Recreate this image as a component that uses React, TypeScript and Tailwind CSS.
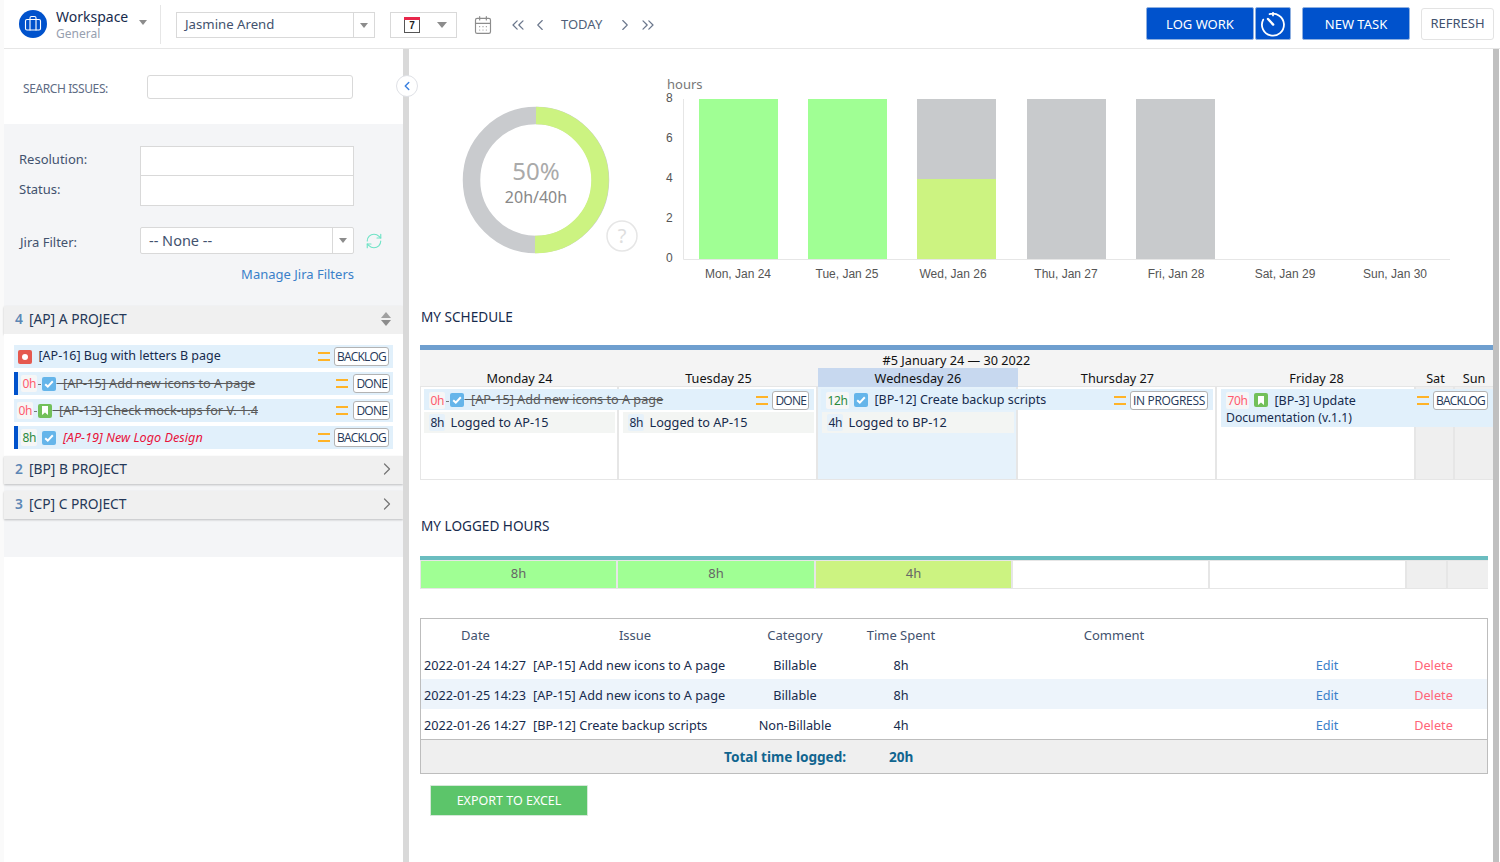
import { Briefcase, CalendarDays, ChevronLeft, ChevronRight, ChevronsLeft, ChevronsRight, RefreshCw } from "lucide-react";

type IssueKind = "bug" | "task" | "story";

function Caret({ className = "" }: { className?: string }) {
    return <span className={`inline-block h-0 w-0 border-x-[4px] border-t-[5px] border-x-transparent border-t-[#8c8c8c] ${className}`} />;
}

function IssueIcon({ kind }: { kind: IssueKind }) {
    if (kind === "bug") {
        return (
            <span className="flex h-[14px] w-[14px] shrink-0 items-center justify-center rounded-[2px] bg-[#e5594f]">
                <span className="h-[6px] w-[6px] rounded-full bg-white" />
            </span>
        );
    }
    if (kind === "story") {
        return (
            <span className="flex h-[14px] w-[14px] shrink-0 items-center justify-center rounded-[2px] bg-[#72c05a]">
                <svg width="8" height="9" viewBox="0 0 8 9">
                    <path d="M1 0h6v9L4 6.5 1 9z" fill="#fff" />
                </svg>
            </span>
        );
    }
    return (
        <span className="flex h-[14px] w-[14px] shrink-0 items-center justify-center rounded-[2px] bg-[#65b5ea]">
            <svg width="10" height="8" viewBox="0 0 10 8">
                <path d="M1.2 4.2 3.8 6.6 8.8 1.2" fill="none" stroke="#fff" strokeWidth="2" />
            </svg>
        </span>
    );
}

function Priority() {
    return (
        <span className="flex w-[12px] shrink-0 flex-col gap-[5px]">
            <span className="h-[2px] bg-[#ffb327]" />
            <span className="h-[2px] bg-[#ffb327]" />
        </span>
    );
}

function Status({ label }: { label: string }) {
    return (
        <span
            className={`shrink-0 rounded-[3px] border border-[#b3b3b3] bg-white px-[2px] text-[12px] leading-[17px] text-[#253858] [font-family:'Open_Sans',sans-serif] ${
                label === "IN PROGRESS" ? "tracking-[-0.3px]" : "tracking-[-0.8px]"
            }`}
        >
            {label}
        </span>
    );
}

function Hours({ value, tone }: { value: string; tone: "red" | "green" | "plain" }) {
    const color = tone === "red" ? "text-[#ff5b6e]" : tone === "green" ? "text-[#2a8a3c]" : "text-[#172b4d]";
    return (
        <span className={`shrink-0 rounded-[2px] px-[1.5px] text-[12px] leading-[17px] tracking-[-0.4px] ${tone === "plain" ? "bg-[#e6f1fa]" : "bg-[#f6f6f6]"} ${color}`}>
            {value}
        </span>
    );
}

function Joiner({ done }: { done?: boolean }) {
    return (
        <span className="flex w-[5px] shrink-0 justify-center">
            {done && <span className="h-px w-[3px] translate-y-[1px] bg-[#777]" />}
        </span>
    );
}

function SideRow({
    text,
    kind,
    status,
    hours,
    tone = "red",
    marked,
    done,
    late,
}: {
    text: string;
    kind: IssueKind;
    status: string;
    hours?: string;
    tone?: "red" | "green";
    marked?: boolean;
    done?: boolean;
    late?: boolean;
}) {
    return (
        <div className={`flex h-[23px] items-center bg-[#e1f0fb] pl-[3px] pt-px ${marked ? "border-l-4 border-[#0052cc]" : ""} ${status === "DONE" ? "pr-[3px]" : "pr-[4px]"}`}>
            {hours ? (
                <>
                    <Hours value={hours} tone={tone} />
                    <Joiner done={done} />
                </>
            ) : (
                <span className="w-px" />
            )}
            <IssueIcon kind={kind} />
            <span
                className={`min-w-0 flex-1 truncate whitespace-pre ${done ? "text-[12.7px] text-[#5a5a5a] line-through" : late ? "text-[12.7px] text-[#e8143c] italic" : "text-[12.5px] text-[#172b4d]"}`}
            >
                {`  ${text}`}
            </span>
            <Priority />
            <span className={status === "DONE" ? "w-[5px]" : "w-[4px]"} />
            <Status label={status} />
        </div>
    );
}

function ProjectHeader({ count, name, open }: { count: number; name: string; open?: boolean }) {
    return (
        <div className="flex h-[28px] items-center justify-between bg-[#f0f0f0] pb-px pl-[11px] pr-[6px] text-[13.8px] text-[#253858] shadow-[0_1px_2px_rgba(0,0,0,0.22)]">
            <span>
                <b className="mr-[6px] font-semibold text-[#5d87b5]">{count}</b>
                {name}
            </span>
            {open ? (
                <span className="flex flex-col gap-[2px] pr-[6px]">
                    <span className="h-0 w-0 border-x-[5px] border-b-[6px] border-x-transparent border-b-[#a0a0a0]" />
                    <span className="h-0 w-0 border-x-[5px] border-t-[6px] border-x-transparent border-t-[#8c8c8c]" />
                </span>
            ) : (
                <ChevronRight size={20} strokeWidth={1.5} className="text-[#777]" />
            )}
        </div>
    );
}

function Sidebar() {
    return (
        <aside className="flex w-[399px] shrink-0 flex-col bg-white text-[#42526e]">
            <div className="flex h-[75px] items-center pl-[19px]">
                <span className="w-[124px] pt-[4px] text-[12px] tracking-[-0.4px] text-[#5e6c84]">SEARCH ISSUES:</span>
                <span className="h-[24px] w-[206px] rounded-[3px] border border-[#d9d9d9] bg-white" />
            </div>
            <div className="flex h-[433px] flex-col bg-[#f4f5f7]">
                <div className="flex pt-[22px] pl-[15px] text-[13px]">
                    <div className="w-[121px]">
                        <div className="h-[30px] leading-[26px]">Resolution:</div>
                        <div className="h-[30px] leading-[26px]">Status:</div>
                    </div>
                    <div className="w-[214px]">
                        <div className="h-[30px] border border-[#d9d9d9] bg-white" />
                        <div className="h-[30px] border border-t-0 border-[#d9d9d9] bg-white" />
                    </div>
                </div>
                <div className="mt-[21px] flex items-center pl-[15px] text-[13px]">
                    <span className="w-[121px] pl-px pt-[5px]">Jira Filter:</span>
                    <span className="flex h-[27px] w-[214px] items-center justify-between rounded-[2px] border border-[#d9d9d9] bg-white">
                        <span className="pl-[8px] text-[14.5px] text-[#42526e]">-- None --</span>
                        <span className="flex h-full w-[21px] items-center justify-center border-l border-[#d9d9d9]">
                            <Caret />
                        </span>
                    </span>
                    <RefreshCw size={18} strokeWidth={1.5} className="ml-[11px] text-[#6fe3c6]" />
                </div>
                <div className="mt-[11px] w-[350px] text-right text-[13px] text-[#3a80c9]">Manage Jira Filters</div>
                <div className="mt-[21px]">
                    <ProjectHeader count={4} name="[AP] A PROJECT" open />
                    <div className="flex flex-col gap-[4px] bg-white pt-[11px] pb-[7px] pl-[10px] pr-[10px]">
                        <SideRow kind="bug" text="[AP-16] Bug with letters B page" status="BACKLOG" />
                        <SideRow kind="task" text="[AP-15] Add new icons to A page" status="DONE" hours="0h" marked done />
                        <SideRow kind="story" text="[AP-13] Check mock-ups for V. 1.4" status="DONE" hours="0h" done />
                        <SideRow kind="task" text="[AP-19] New Logo Design" status="BACKLOG" hours="8h" tone="green" marked late />
                    </div>
                    <ProjectHeader count={2} name="[BP] B PROJECT" />
                    <div className="mt-[7px]">
                        <ProjectHeader count={3} name="[CP] C PROJECT" />
                    </div>
                </div>
            </div>
        </aside>
    );
}

function TopBar() {
    return (
        <header className="flex h-[49px] items-center border-b border-[#e6e6e6] bg-white pl-[15px] pr-[6px] text-[#42526e]">
            <span className="flex h-[28px] w-[28px] items-center justify-center rounded-full bg-[#0052cc]">
                <Briefcase size={18} strokeWidth={1.5} className="text-white" />
            </span>
            <span className="ml-[9px] flex w-[83px] flex-col">
                <span className="text-[14px] leading-[19px] text-[#172b4d]">Workspace</span>
                <span className="text-[12px] leading-[15px] text-[#97a0af]">General</span>
            </span>
            <Caret className="-mt-[3px]" />
            <span className="ml-[13px] h-[39px] w-px bg-[#e6e6e6]" />
            <span className="ml-[15px] mt-[2px] flex h-[26px] w-[199px] items-center border border-[#d9d9d9] text-[13.2px]">
                <span className="flex-1 pl-[8px] text-[#42526e]">Jasmine Arend</span>
                <span className="flex h-full w-[21px] items-center justify-center border-l border-[#d9d9d9]">
                    <Caret />
                </span>
            </span>
            <span className="ml-[15px] mt-[2px] flex h-[26px] w-[67px] items-center border border-[#d9d9d9] pl-[13px]">
                <span className="flex h-[16px] w-[16px] flex-col border border-[#555] border-t-0">
                    <span className="-mx-px h-[4px] bg-[#e8274b]" />
                    <span className="text-center font-['Liberation_Sans',sans-serif] text-[10px] font-bold leading-[12px] text-[#222]">7</span>
                </span>
                <Caret className="ml-[17px] border-x-[5px] border-t-[6px]" />
            </span>
            <CalendarDays size={20} strokeWidth={1.4} className="ml-[16px] mt-[2px] text-[#8c8c8c]" />
            <ChevronsLeft size={20} strokeWidth={1.5} className="ml-[15px] mt-[2px] text-[#6b778c]" />
            <ChevronLeft size={18} strokeWidth={1.5} className="ml-[3px] mt-[2px] text-[#6b778c]" />
            <span className="ml-[12px] mt-[2px] text-[13px] text-[#505f79]">TODAY</span>
            <ChevronRight size={18} strokeWidth={1.5} className="ml-[14px] mt-[2px] text-[#6b778c]" />
            <ChevronsRight size={20} strokeWidth={1.5} className="ml-[4px] mt-[2px] text-[#6b778c]" />
            <span className="flex-1" />
            <button className="-mt-[1px] h-[33px] w-[108px] rounded-[2px] border border-[#8fb0e0] bg-[#0052cc] pt-[2px] text-[13px] text-white">LOG WORK</button>
            <button className="-mt-[1px] ml-[1px] flex h-[33px] w-[36px] items-center justify-center rounded-[2px] border border-[#8fb0e0] bg-[#0052cc]">
                <svg width="26" height="26" viewBox="0 0 26 26" fill="none" stroke="#fff" strokeWidth="1.8" strokeLinecap="round">
                    <path d="M9.6 3.2A11 11 0 1 1 3.2 8.6" />
                    <path d="M8 8 13.2 13.6" strokeWidth="2.4" />
                    <path d="M13 1.8V4.4" />
                </svg>
            </button>
            <button className="-mt-[1px] ml-[11px] h-[33px] w-[108px] rounded-[2px] border border-[#8fb0e0] bg-[#0052cc] pt-[2px] text-[13px] text-white">NEW TASK</button>
            <button className="-mt-[1px] ml-[11px] h-[32px] w-[73px] rounded-[3px] border border-[#e3e3e3] bg-white text-[13px] text-[#42526e]">REFRESH</button>
        </header>
    );
}

const bars = [
    { x: 39, label: "Mon, Jan 24", cx: 78, parts: ["#a0ff94"] },
    { x: 148, label: "Tue, Jan 25", cx: 187, parts: ["#a0ff94"] },
    { x: 257, label: "Wed, Jan 26", cx: 293, parts: ["#c8cacc", "#ccf381"] },
    { x: 367, label: "Thu, Jan 27", cx: 406, parts: ["#c8cacc"] },
    { x: 476, label: "Fri, Jan 28", cx: 516, parts: ["#c8cacc"] },
    { x: 0, label: "Sat, Jan 29", cx: 625, parts: [] },
    { x: 0, label: "Sun, Jan 30", cx: 735, parts: [] },
];

function Charts() {
    return (
        <div className="flex h-[251px] pl-[30px]">
            <svg width="210" height="251" className="shrink-0" viewBox="0 0 210 251">
                <circle cx="86" cy="131" r="64.5" fill="none" stroke="#c9cbce" strokeWidth="17.5" />
                <path d="M86 66.5A64.5 64.5 0 0 1 85 195.5" fill="none" stroke="#ccf381" strokeWidth="17.5" />
                <text x="86" y="131" textAnchor="middle" fontSize="24" fill="#aaa" fontFamily="Noto Sans">50%</text>
                <text x="86" y="154" textAnchor="middle" fontSize="16" fill="#888" fontFamily="Noto Sans">20h/40h</text>
                <circle cx="172" cy="187" r="15" fill="#fff" stroke="#e6e6e6" strokeWidth="1.5" />
                <text x="172" y="194" textAnchor="middle" fontSize="20" fill="#dedede" fontFamily="Noto Sans">?</text>
            </svg>
            <svg width="833" height="251" viewBox="0 0 833 251" fontFamily="Liberation Sans" className="shrink-0">
                <text x="7" y="40" fontSize="13" fill="#777" fontFamily="Noto Sans">hours</text>
                {[8, 6, 4, 2, 0].map((n, i) => (
                    <text key={n} x="6" y={53 + i * 40} fontSize="12" fill="#555">{n}</text>
                ))}
                <path d="M23.5 50V210.5H790" fill="none" stroke="#e6e6e6" />
                {bars.map((b) => (
                    <g key={b.label}>
                        {b.parts.length === 1 && <rect x={b.x} y="50" width="79" height="160" fill={b.parts[0]} />}
                        {b.parts.length === 2 && (
                            <>
                                <rect x={b.x} y="50" width="79" height="80" fill={b.parts[0]} />
                                <rect x={b.x} y="130" width="79" height="80" fill={b.parts[1]} />
                            </>
                        )}
                        <text x={b.cx} y="229" textAnchor="middle" fontSize="12" fill="#555">{b.label}</text>
                    </g>
                ))}
            </svg>
        </div>
    );
}

function CalEvent({
    hours,
    tone,
    kind,
    text,
    status,
    done,
}: {
    hours: string;
    tone: "red" | "green";
    kind: IssueKind;
    text: string;
    status: string;
    done?: boolean;
}) {
    return (
        <div className="flex h-[21px] items-center bg-[#e1f0fb] pl-[5px] pr-[5px] pt-px">
            <Hours value={hours} tone={tone} />
            <Joiner done={done} />
            <IssueIcon kind={kind} />
            <span className={`min-w-0 flex-1 truncate whitespace-pre ${done ? "text-[12.7px] text-[#5a5a5a] line-through" : "text-[12.5px] text-[#172b4d]"}`}>{`  ${text}`}</span>
            <Priority />
            <span className="w-[4px]" />
            <Status label={status} />
        </div>
    );
}

function Logged({ col, hours, text }: { col: string; hours: string; text: string }) {
    return (
        <div className={`${col} row-start-2 z-10 mx-[4px] flex h-[21px] items-center bg-[#f3f5f3] pl-[5px] text-[12.7px] text-[#172b4d]`}>
            <Hours value={hours} tone="plain" />
            <span className="whitespace-pre pl-[5px]">{text}</span>
        </div>
    );
}

function Schedule() {
    const days = [
        { label: "Monday 24", active: false },
        { label: "Tuesday 25", active: false },
        { label: "Wednesday 26", active: true },
        { label: "Thursday 27", active: false },
        { label: "Friday 28", active: false },
        { label: "Sat", active: false },
        { label: "Sun", active: false },
    ];
    return (
        <section className="border-t-[5px] border-[#6f9fcf] text-[#172b4d]">
            <div className="bg-[#f4f4f4]">
                <div className="h-[18px] pt-[1px] text-center text-[12.7px] leading-[18px] text-[#111]">#5 January 24 — 30 2022</div>
                <div className="grid h-[18px] grid-cols-[199px_199px_200px_199px_199px_39px_38px]">
                    {days.map((d) => (
                        <div key={d.label} className={`text-center text-[12.7px] leading-[20px] text-[#111] ${d.active ? "bg-[#c7d8ef]" : ""}`}>
                            {d.label}
                        </div>
                    ))}
                </div>
            </div>
            <div className="grid h-[94px] grid-cols-[199px_199px_200px_199px_199px_39px_38px] grid-rows-[23px_1fr] border-y border-[#e6e6e6] pt-[2px]">
                <div className="col-start-1 row-span-2 row-start-1 -mt-[2px] border-l border-r-2 border-[#e6e6e6]" />
                <div className="col-start-2 row-span-2 row-start-1 -mt-[2px] border-r-2 border-[#e6e6e6]" />
                <div className="col-start-3 row-span-2 row-start-1 -mt-[2px] border-r-2 border-[#e6e6e6] bg-[#e6f2fb]" />
                <div className="col-start-4 row-span-2 row-start-1 -mt-[2px] border-r-2 border-[#e6e6e6]" />
                <div className="col-start-5 row-span-2 row-start-1 -mt-[2px] border-r-2 border-[#e6e6e6]" />
                <div className="col-start-6 row-span-2 row-start-1 -mt-[2px] border-r-2 border-[#e6e6e6] bg-[#efefef]" />
                <div className="col-start-7 row-span-2 row-start-1 -mt-[2px] bg-[#efefef]" />
                <div className="z-10 col-span-2 col-start-1 row-start-1 pl-[4px] pr-[4px]">
                    <CalEvent hours="0h" tone="red" kind="task" text="[AP-15] Add new icons to A page" status="DONE" done />
                </div>
                <Logged col="col-start-1" hours="8h" text="Logged to AP-15" />
                <Logged col="col-start-2" hours="8h" text="Logged to AP-15" />
                <div className="z-10 col-span-2 col-start-3 row-start-1 pl-[3px] pr-[4px]">
                    <CalEvent hours="12h" tone="green" kind="task" text="[BP-12] Create backup scripts" status="IN PROGRESS" />
                </div>
                <Logged col="col-start-3" hours="4h" text="Logged to BP-12" />
                <div className="z-10 col-span-3 col-start-5 row-span-2 row-start-1 ml-[4px] h-[38px] bg-[#e1f0fb] pl-[5px] pr-[5px] leading-[17px]">
                    <div className="flex h-[21px] items-center pt-px">
                        <Hours value="70h" tone="red" />
                        <Joiner />
                        <IssueIcon kind="story" />
                        <span className="flex-1 whitespace-pre text-[12.5px] text-[#172b4d]">{"  [BP-3] Update"}</span>
                        <Priority />
                        <span className="w-[4px]" />
                        <Status label="BACKLOG" />
                    </div>
                    <div className="-mt-[1px] text-[12.2px] text-[#172b4d]">Documentation (v.1.1)</div>
                </div>
            </div>
        </section>
    );
}

function LoggedHours() {
    const cells = [
        { label: "8h", bg: "bg-[#a0ff94]" },
        { label: "8h", bg: "bg-[#a0ff94]" },
        { label: "4h", bg: "bg-[#ccf381]" },
        { label: "", bg: "bg-white" },
        { label: "", bg: "bg-white" },
        { label: "", bg: "bg-[#efefef]" },
        { label: "", bg: "bg-[#efefef]" },
    ];
    return (
        <section className="mr-[5px] border-t-4 border-[#6bbdc0]">
            <div className="grid h-[29px] grid-cols-[195px_196px_195px_195px_195px_39px_1fr] gap-[2px] bg-[#e6e6e6] pb-px pl-px pt-px">
                {cells.map((c, i) => (
                    <div key={i} className={`${c.bg} text-center text-[13px] leading-[25px] text-[#666]`}>
                        {c.label}
                    </div>
                ))}
            </div>
        </section>
    );
}

const worklogs = [
    { date: "2022-01-24 14:27", issue: "[AP-15] Add new icons to A page", category: "Billable", spent: "8h" },
    { date: "2022-01-25 14:23", issue: "[AP-15] Add new icons to A page", category: "Billable", spent: "8h" },
    { date: "2022-01-26 14:27", issue: "[BP-12] Create backup scripts", category: "Non-Billable", spent: "4h" },
];

const logCols = "grid grid-cols-[109px_210px_110px_102px_324px_102px_111px] items-center";

function LogTable() {
    return (
        <div className="mr-[5px] mt-[29px] border border-[#bdbdbd] text-[12.7px] text-[#172b4d]">
            <div className={`${logCols} h-[30px] pt-[3px] text-center text-[13px] text-[#42526e]`}>
                <span>Date</span>
                <span>Issue</span>
                <span>Category</span>
                <span>Time Spent</span>
                <span>Comment</span>
            </div>
            {worklogs.map((w, i) => (
                <div key={w.date} className={`${logCols} h-[30px] pt-[3px] text-center ${i === 1 ? "bg-[#edf4fb]" : ""}`}>
                    <span className="whitespace-nowrap pl-[3px] text-left">{w.date}</span>
                    <span className="pl-[3px] text-left">{w.issue}</span>
                    <span>{w.category}</span>
                    <span>{w.spent}</span>
                    <span />
                    <span className="text-[#3a80c9]">Edit</span>
                    <span className="text-[#ff6478]">Delete</span>
                </div>
            ))}
            <div className="flex h-[34px] items-center border-t border-[#bdbdbd] bg-[#efefef] pt-px text-[13.6px] font-bold text-[#11658f]">
                <span className="ml-[303px] w-[165px]">Total time logged:</span>
                <span>20h</span>
            </div>
        </div>
    );
}

export default function App() {
    return (
        <div className="flex h-[862px] w-[1500px] flex-col overflow-hidden bg-[#fafafa] pl-[4px] font-['Noto_Sans',sans-serif]">
            <TopBar />
            <div className="flex min-h-0 flex-1 bg-white">
                <Sidebar />
                <div className="relative w-[6px] shrink-0 bg-[#d9d9d9]">
                    <span className="absolute left-[-7px] top-[26px] z-20 flex h-[22px] w-[22px] items-center justify-center rounded-full border border-[#dfe1e6] bg-white">
                        <ChevronLeft size={14} strokeWidth={2.5} className="text-[#3a80e0]" />
                    </span>
                </div>
                <main className="w-[1084px] shrink-0 pl-[11px]">
                    <Charts />
                    <h2 className="mb-[9px] flex h-[36px] items-center pb-px pl-px text-[13.6px] font-normal text-[#172b4d]">MY SCHEDULE</h2>
                    <Schedule />
                    <h2 className="mb-[11px] mt-[29px] flex h-[36px] items-center pb-px pl-px text-[13.6px] font-normal text-[#172b4d]">MY LOGGED HOURS</h2>
                    <LoggedHours />
                    <LogTable />
                    <button className="ml-[10px] mt-[11px] h-[31px] w-[158px] rounded-[1px] border border-[#d5e8d8] bg-[#5cc56a] pt-px text-[12.5px] text-white">
                        EXPORT TO EXCEL
                    </button>
                </main>
                <div className="w-[6px] shrink-0 bg-[#c0c0c0]" />
            </div>
        </div>
    );
}
